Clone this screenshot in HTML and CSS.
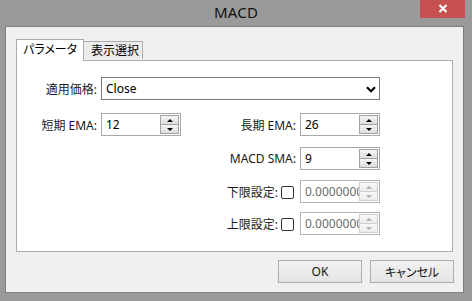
FILE: index.html
```html
<!DOCTYPE html>
<html lang="ja">
<head>
<meta charset="utf-8">
<title>MACD</title>
<link rel="stylesheet" href="styles.css">
</head>
<body>
<div class="window">
  <div class="titlebar">
    <span></span>
    <div class="title">MACD</div>
    <div class="close-wrap">
      <div class="close">
        <svg width="10" height="9" viewBox="0 0 10 9"><path d="M1.5 1 L8.5 8 M8.5 1 L1.5 8" stroke="#fff" stroke-width="2" fill="none"/></svg>
      </div>
    </div>
  </div>
  <div class="client">
    <div class="tabs">
      <div class="tab active">パラメータ</div>
      <div class="tab">表示選択</div>
    </div>
    <div class="panel">
      <div class="form">
        <div class="lbl r1 c1">適用価格:</div>
        <div class="select r1">
          <span class="val">Close</span>
          <svg class="chev" width="10" height="7" viewBox="0 0 10 7"><path d="M1 1.3 L5 5.3 L9 1.3" stroke="#000" stroke-width="2.2" fill="none"/></svg>
        </div>

        <div class="lbl r2 c1">短期 EMA:</div>
        <div class="spin r2 c2"><span class="val">12</span><div class="btns"><div class="b up"><i></i></div><div class="b dn"><i></i></div></div></div>
        <div class="lbl r2 c3">長期 EMA:</div>
        <div class="spin r2 c4"><span class="val">26</span><div class="btns"><div class="b up"><i></i></div><div class="b dn"><i></i></div></div></div>

        <div class="lbl r3 c3">MACD SMA:</div>
        <div class="spin r3 c4"><span class="val">9</span><div class="btns"><div class="b up"><i></i></div><div class="b dn"><i></i></div></div></div>

        <div class="lbl r4 c3">下限設定:<span class="check"></span></div>
        <div class="spin disabled r4 c4"><span class="val">0.00000000</span><div class="btns"><div class="b up"><i></i></div><div class="b dn"><i></i></div></div></div>

        <div class="lbl r5 c3">上限設定:<span class="check"></span></div>
        <div class="spin disabled r5 c4"><span class="val">0.00000000</span><div class="btns"><div class="b up"><i></i></div><div class="b dn"><i></i></div></div></div>
      </div>
    </div>
    <div class="buttons">
      <div class="btn">OK</div>
      <div class="btn">キャンセル</div>
    </div>
  </div>
</div>
</body>
</html>
```

FILE: styles.css
```css
* { box-sizing: border-box; }
html, body { margin: 0; padding: 0; }
body {
  font-family: "Noto Sans", "Noto Sans CJK JP", sans-serif;
  font-size: 12px;
  font-feature-settings: "palt";
  color: #000;
  background: #9a9a9a;
}
.window {
  width: 472px;
  height: 301px;
  background: #9a9a9a;
  display: flex;
  flex-direction: column;
}
.titlebar {
  height: 26px;
  display: grid;
  grid-template-columns: 1fr auto 1fr;
  align-items: start;
}
.title {
  font-size: 15px;
  line-height: 25px;
  color: #111;
  letter-spacing: 0.2px;
}
.close-wrap {
  display: flex;
  justify-content: flex-end;
  padding-right: 7px;
}
.close {
  width: 45px;
  height: 18px;
  background: #c75050;
  display: flex;
  align-items: center;
  justify-content: center;
  padding-bottom: 1px;
}
.close svg { display: block; }
.client {
  margin: 0 8px 8px 5px;
  height: 267px;
  border: 1px solid #7d7d7d;
  background: #f0f0f0;
  display: flex;
  flex-direction: column;
}
.tabs {
  display: flex;
  align-items: flex-end;
  margin: 11px 0 0 10px;
  height: 22px;
  position: relative;
  z-index: 1;
}
.tab {
  height: 18px;
  width: 59px;
  border: 1px solid #acacac;
  border-left: none;
  border-bottom: none;
  background: #ececec;
  padding-left: 7px;
  line-height: 17px;
  margin-bottom: 1px;
}
.tab.active {
  width: 68px;
  height: 22px;
  border-left: 1px solid #acacac;
  background: #fff;
  padding-left: 6px;
  line-height: 19px;
  margin-bottom: -1px;
}
.panel {
  margin: 0 10px;
  height: 192px;
  background: #fff;
  border: 1px solid #acacac;
}
.form {
  display: grid;
  grid-template-columns: 80px 80px 111px 80px;
  grid-template-rows: 36px 34px 33px 32px 23px;
  column-gap: 4px;
  padding-top: 16px;
}
.r1 { grid-row: 1; }
.r2 { grid-row: 2; }
.r3 { grid-row: 3; }
.r4 { grid-row: 4; }
.r5 { grid-row: 5; }
.c1 { grid-column: 1; }
.c2 { grid-column: 2; }
.c3 { grid-column: 3; }
.c4 { grid-column: 4; }
.lbl {
  height: 23px;
  display: flex;
  align-items: center;
  justify-content: flex-end;
  white-space: nowrap;
  color: #1a1a1a;
}
.select {
  grid-column: 2 / 5;
  height: 23px;
  border: 1px solid #7a7a7a;
  background: #fff;
  display: flex;
  align-items: center;
  padding: 0 2px 0 4px;
}
.select .val { flex: 1; }
.chev { display: block; margin-right: 1px; margin-top: 1px; }
.spin {
  height: 23px;
  border: 1px solid #a9a9a9;
  background: #fff;
  display: flex;
  align-items: center;
  padding: 1px 1px 1px 4px;
  overflow: hidden;
}
.spin .val {
  flex: 1;
  min-width: 0;
  overflow: hidden;
  white-space: nowrap;
}
.btns {
  width: 19px;
  height: 19px;
  flex: none;
  display: flex;
  flex-direction: column;
  margin-left: -2px;
}
.b {
  flex: 1;
  border: 1px solid #a2a2a2;
  background: linear-gradient(#f4f4f4, #dedede);
  display: flex;
  align-items: center;
  justify-content: center;
}
.b.dn { border-top: none; }
.b i {
  display: block;
  width: 0;
  height: 0;
  border-left: 3px solid transparent;
  border-right: 3px solid transparent;
}
.b.up i { border-bottom: 3px solid #000; }
.b.dn i { border-top: 3px solid #000; }
.spin.disabled { border-color: #b4b4b4; }
.spin.disabled .val { color: #6d6d6d; }
.spin.disabled .b { border-color: #cfcfcf; background: linear-gradient(#f7f7f7, #ececec); }
.spin.disabled .b.up i { border-bottom-color: #b0b0b0; }
.spin.disabled .b.dn i { border-top-color: #b0b0b0; }
.check {
  width: 13px;
  height: 13px;
  border: 1px solid #333;
  border-radius: 2px;
  background: #fff;
  margin: 1px 2px 0 3px;
  flex: none;
}
.buttons {
  display: flex;
  justify-content: flex-end;
  gap: 8px;
  margin: 8px 9px 0 0;
}
.btn {
  width: 84px;
  height: 23px;
  border: 1px solid #acacac;
  background: linear-gradient(#f2f2f2, #e4e4e4);
  display: flex;
  align-items: center;
  justify-content: center;
  color: #111;
}
```
